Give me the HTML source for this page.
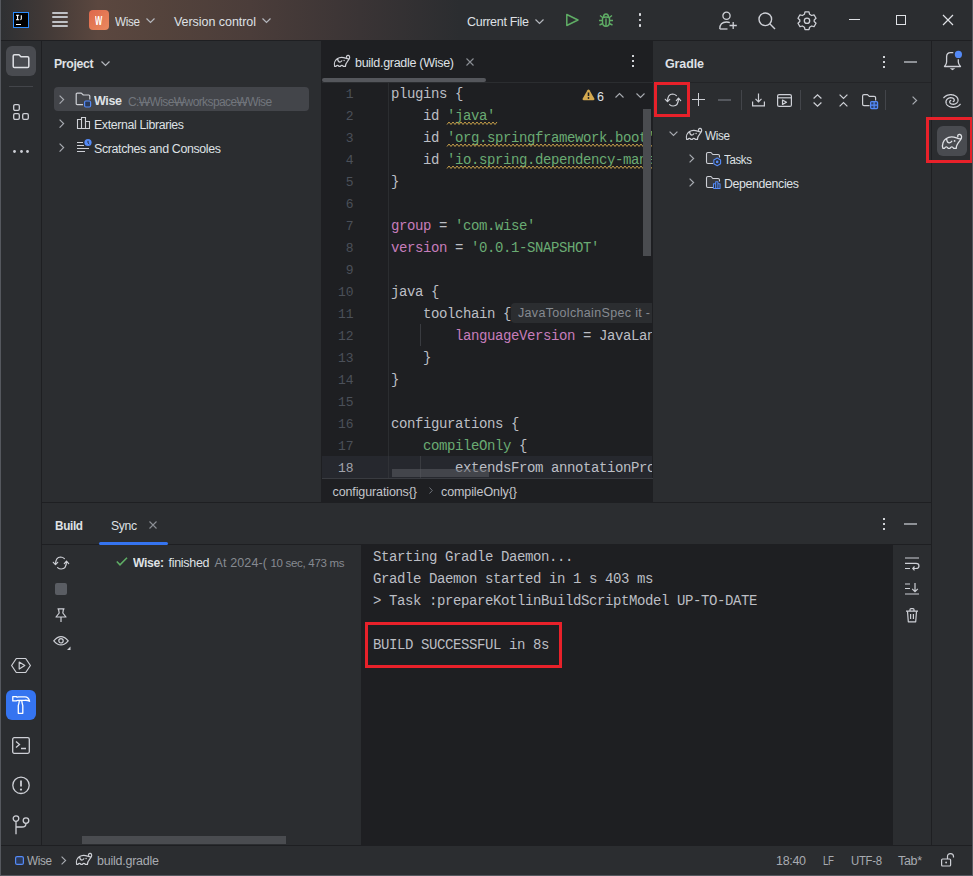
<!DOCTYPE html>
<html><head><meta charset="utf-8">
<style>
*{margin:0;padding:0;box-sizing:border-box}
html,body{width:973px;height:876px;overflow:hidden;background:#2b2d30}
body{position:relative;font-family:"Liberation Sans",sans-serif;font-size:13px;color:#dfe1e5}
.a{position:absolute}
.t{position:absolute;white-space:pre;line-height:1}
svg{position:absolute;overflow:visible}
</style></head><body>
<div class="a" style="left:0px;top:0px;width:973px;height:40px;background:linear-gradient(to right,#2e3033 0px,#3f3836 40px,#5b473f 98px,#54433c 160px,#4b3d3a 250px,#3a3435 360px,#2b2d30 460px);"></div>
<div class="a" style="left:0px;top:40px;width:973px;height:1px;background:#1e1f22;"></div>
<div class="a" style="left:41px;top:41px;width:1px;height:804px;background:#1e1f22;"></div>
<div class="a" style="left:321px;top:41px;width:332px;height:461px;background:#1e1f22;"></div>
<div class="a" style="left:931px;top:41px;width:1px;height:804px;background:#1e1f22;"></div>
<div class="a" style="left:42px;top:502px;width:889px;height:1px;background:#1e1f22;"></div>
<div class="a" style="left:42px;top:544px;width:889px;height:1px;background:#1e1f22;"></div>
<div class="a" style="left:361px;top:545px;width:532px;height:300px;background:#1e1f22;"></div>
<div class="a" style="left:0px;top:845px;width:973px;height:1px;background:#1e1f22;"></div>
<div class="a" style="left:13px;top:12px;width:16px;height:16px;background:#000;border:1px solid #2a8cff"></div>
<svg style="left:13px;top:12px;" width="16" height="16" viewBox="0 0 16 16"><path d="M3 3.3 H6.2 M4.6 3.3 V7.7 M3 7.7 H6.2 M8.3 3.3 V6.8 Q8.3 7.7 7.3 7.7" fill="none" stroke="#fff" stroke-width="1.1"/></svg>
<div class="a" style="left:16px;top:24px;width:5px;height:1px;background:#fff;"></div>
<div class="a" style="left:52px;top:12px;width:16px;height:2px;background:#bfc1c6;border-radius:1px"></div>
<div class="a" style="left:52px;top:16px;width:16px;height:2px;background:#bfc1c6;border-radius:1px"></div>
<div class="a" style="left:52px;top:21px;width:16px;height:2px;background:#bfc1c6;border-radius:1px"></div>
<div class="a" style="left:52px;top:25px;width:16px;height:2px;background:#bfc1c6;border-radius:1px"></div>
<div class="a" style="left:89px;top:10px;width:20px;height:20px;background:linear-gradient(135deg,#de684c,#ea8a5f);border-radius:4px"></div>
<div class="t" style="left:95px;top:15.24px;font-size:12px;color:#fff;font-family:'Liberation Sans',sans-serif;font-weight:bold;transform:scaleX(0.64);transform-origin:left;">W</div>
<div class="t" style="left:115px;top:16.42px;font-size:12.5px;color:#dfe1e5;font-family:'Liberation Sans',sans-serif;letter-spacing:-0.35px;transform:scaleX(0.9355);transform-origin:left;">Wise</div>
<svg style="left:146px;top:17.5px;" width="9" height="6" viewBox="0 0 9 6"><path d="M0.5 0.5 L4.5 4.5 L8.5 0.5" fill="none" stroke="#b4b7bd" stroke-width="1.2"/></svg>
<div class="t" style="left:174px;top:16.42px;font-size:12.5px;color:#dfe1e5;font-family:'Liberation Sans',sans-serif;letter-spacing:-0.049107142857142856px;">Version control</div>
<svg style="left:262px;top:17.5px;" width="9" height="6" viewBox="0 0 9 6"><path d="M0.5 0.5 L4.5 4.5 L8.5 0.5" fill="none" stroke="#b4b7bd" stroke-width="1.2"/></svg>
<div class="t" style="left:467px;top:16.42px;font-size:12.5px;color:#dfe1e5;font-family:'Liberation Sans',sans-serif;letter-spacing:-0.29999999999999977px;">Current File</div>
<svg style="left:535px;top:18.5px;" width="9" height="6" viewBox="0 0 9 6"><path d="M0.5 0.5 L4.5 4.5 L8.5 0.5" fill="none" stroke="#b4b7bd" stroke-width="1.2"/></svg>
<svg style="left:565px;top:13px;" width="15" height="14" viewBox="0 0 15 14"><path d="M1.8 1.5 L13 7 L1.8 12.5 Z" fill="none" stroke="#5fad65" stroke-width="1.5" stroke-linejoin="round"/></svg>
<svg style="left:598px;top:12px;" width="16" height="16" viewBox="0 0 16 16"><g fill="none" stroke="#5fad65" stroke-width="1.4"><path d="M4.5 6 Q8 4 11.5 6 V10 Q11.5 14.3 8 14.3 Q4.5 14.3 4.5 10 Z"/><path d="M5.5 5.5 Q5.5 2 8 2 Q10.5 2 10.5 5.5"/><path d="M1 8.5 H4.5 M15 8.5 H11.5 M1.5 13 L4.8 11.5 M14.5 13 L11.2 11.5 M2 3.5 L5 5.8 M14 3.5 L11 5.8 M8 6.5 V14"/></g></svg>
<div class="a" style="left:638.8px;top:13.3px;width:2.6px;height:2.6px;background:#dfe1e5;border-radius:0.8px"></div>
<div class="a" style="left:638.8px;top:18.8px;width:2.6px;height:2.6px;background:#dfe1e5;border-radius:0.8px"></div>
<div class="a" style="left:638.8px;top:24.2px;width:2.6px;height:2.6px;background:#dfe1e5;border-radius:0.8px"></div>
<svg style="left:719px;top:11px;" width="19" height="19" viewBox="0 0 19 19"><g fill="none" stroke="#ced0d6" stroke-width="1.3"><circle cx="7.5" cy="4.8" r="3.6"/><path d="M0.8 18 Q0.8 11 7.5 11 Q9.5 11 10.8 11.6"/><path d="M0.8 18 H8.5"/><path d="M10.5 14.5 H17.8 M14.2 11 V18"/></g></svg>
<svg style="left:758px;top:12px;" width="18" height="18" viewBox="0 0 18 18"><g fill="none" stroke="#ced0d6" stroke-width="1.4"><circle cx="7.3" cy="7.3" r="6.3"/><path d="M11.8 11.8 L17 17"/></g></svg>
<svg style="left:798px;top:11px;" width="18" height="19" viewBox="0 0 18 19"><g fill="none" stroke="#ced0d6" stroke-width="1.3" stroke-linejoin="round"><path d="M7 0.9 H11 L11.6 3.3 L13.6 4.5 L16 3.8 L18 7.3 L16.2 9 V10.5 L18 12.2 L16 15.7 L13.6 15 L11.6 16.2 L11 18.6 H7 L6.4 16.2 L4.4 15 L2 15.7 L0 12.2 L1.8 10.5 V9 L0 7.3 L2 3.8 L4.4 4.5 L6.4 3.3 Z"/><circle cx="9" cy="9.75" r="2.7"/></g></svg>
<div class="a" style="left:849px;top:19px;width:11px;height:1.2px;background:#dfe1e5;"></div>
<div class="a" style="left:896px;top:15px;width:10px;height:10px;background:transparent;border:1.2px solid #dfe1e5"></div>
<svg style="left:942px;top:14px;" width="12" height="12" viewBox="0 0 12 12"><path d="M1 1 L11 11 M11 1 L1 11" stroke="#dfe1e5" stroke-width="1.2"/></svg>
<div class="a" style="left:6px;top:46px;width:30px;height:30px;background:#494b50;border-radius:6px"></div>
<svg style="left:12px;top:53px;" width="18" height="16" viewBox="0 0 18 16"><path d="M1.2 3 Q1.2 1.7 2.5 1.7 H7 L9 3.8 H15.5 Q16.8 3.8 16.8 5.1 V13.3 Q16.8 14.6 15.5 14.6 H2.5 Q1.2 14.6 1.2 13.3 Z" fill="none" stroke="#dfe1e5" stroke-width="1.5" stroke-linejoin="round"/></svg>
<div class="a" style="left:9px;top:86px;width:24px;height:1px;background:#43454a;"></div>
<svg style="left:13px;top:104px;" width="17" height="17" viewBox="0 0 17 17"><g fill="none" stroke="#ced0d6" stroke-width="1.3"><rect x="0.7" y="0.7" width="5.6" height="5.6" rx="1.3"/><rect x="0.7" y="9.7" width="5.6" height="5.6" rx="1.3"/><rect x="9.7" y="9.7" width="5.6" height="5.6" rx="1.3"/></g></svg>
<svg style="left:13.0px;top:150px;" width="3" height="3" viewBox="0 0 3 3"><circle cx="1.5" cy="1.5" r="1.4" fill="#ced0d6"/></svg>
<svg style="left:19.5px;top:150px;" width="3" height="3" viewBox="0 0 3 3"><circle cx="1.5" cy="1.5" r="1.4" fill="#ced0d6"/></svg>
<svg style="left:26.0px;top:150px;" width="3" height="3" viewBox="0 0 3 3"><circle cx="1.5" cy="1.5" r="1.4" fill="#ced0d6"/></svg>
<svg style="left:11px;top:657px;" width="20" height="17" viewBox="0 0 20 17"><g fill="none" stroke="#ced0d6" stroke-width="1.2" stroke-linejoin="round"><path d="M5.3 1.5 H14.7 L19.4 8.5 L14.7 15.5 H5.3 L0.6 8.5 Z"/><path d="M8.2 5 L13.8 8.5 L8.2 12 Z"/></g></svg>
<div class="a" style="left:6px;top:690px;width:30px;height:30px;background:#3574f0;border-radius:6px"></div>
<svg style="left:6px;top:690px;" width="30" height="30" viewBox="0 0 30 30"><g fill="none" stroke="#ffffff" stroke-width="1.3" stroke-linejoin="round"><path d="M6.8 6.6 H10.2 Q11.2 7.3 12.3 6.9 H19 Q22.6 6.9 23.6 11.3 Q21 9.9 18.5 10.4 H12.3 Q11.2 10.1 10.2 10.9 H6.8 Z"/><path d="M13.3 10.6 H15.8 Q15.9 13.5 16.8 15.5 V23.3 H12.3 V15.5 Q13.2 13.5 13.3 10.6 Z"/></g></svg>
<svg style="left:12px;top:737px;" width="18" height="17" viewBox="0 0 18 17"><g fill="none" stroke="#ced0d6" stroke-width="1.3"><rect x="0.7" y="0.7" width="16.6" height="15.6" rx="1.5"/><path d="M4 4.5 L7.5 7.5 L4 10.5 M9 11.5 H14"/></g></svg>
<svg style="left:12px;top:776px;" width="19" height="19" viewBox="0 0 19 19"><g fill="none" stroke="#ced0d6" stroke-width="1.3"><circle cx="9" cy="9.3" r="8.2"/><path d="M9 4.5 V10.5" stroke-width="1.8"/></g><circle cx="9" cy="13.6" r="1.1" fill="#ced0d6"/></svg>
<svg style="left:12px;top:815px;" width="18" height="20" viewBox="0 0 18 20"><g fill="none" stroke="#ced0d6" stroke-width="1.3"><circle cx="4" cy="3.6" r="2.8"/><circle cx="14" cy="5.6" r="2.8"/><path d="M4 6.4 V19.2 M4 12 H10 Q14 12 14 8.4"/></g></svg>
<div class="t" style="left:54px;top:58.42px;font-size:12.5px;color:#dfe1e5;font-family:'Liberation Sans',sans-serif;font-weight:bold;letter-spacing:-0.35px;transform:scaleX(0.9808);transform-origin:left;">Project</div>
<svg style="left:101px;top:61px;" width="9" height="6" viewBox="0 0 9 6"><path d="M0.5 0.5 L4.5 4.5 L8.5 0.5" fill="none" stroke="#b4b7bd" stroke-width="1.2"/></svg>
<div class="a" style="left:54px;top:87px;width:255px;height:24px;background:#43454a;border-radius:4px"></div>
<svg style="left:59px;top:95px;" width="6" height="10" viewBox="0 0 6 10"><path d="M0.6 0.6 L4.6 4.6 L0.6 8.6" fill="none" stroke="#a8abb1" stroke-width="1.2"/></svg>
<svg style="left:59px;top:119px;" width="6" height="10" viewBox="0 0 6 10"><path d="M0.6 0.6 L4.6 4.6 L0.6 8.6" fill="none" stroke="#a8abb1" stroke-width="1.2"/></svg>
<svg style="left:59px;top:143px;" width="6" height="10" viewBox="0 0 6 10"><path d="M0.6 0.6 L4.6 4.6 L0.6 8.6" fill="none" stroke="#a8abb1" stroke-width="1.2"/></svg>
<svg style="left:75px;top:92px;" width="18" height="16" viewBox="0 0 18 16"><path d="M8 12.6 H2.3 Q1.2 12.6 1.2 11.5 V2.2 Q1.2 1.1 2.3 1.1 H6.3 L8.3 3 H13.7 Q14.8 3 14.8 4.1 V7.5" fill="none" stroke="#ced0d6" stroke-width="1.2" stroke-linejoin="round"/><rect x="9.6" y="9" width="6" height="6" rx="1.2" fill="#2b3a5a" stroke="#548af7" stroke-width="1.2"/></svg>
<div class="t" style="left:94px;top:95.42px;font-size:12.5px;color:#dfe1e5;font-family:'Liberation Sans',sans-serif;font-weight:bold;letter-spacing:-0.35px;transform:scaleX(0.9996);transform-origin:left;">Wise</div>
<div class="t" style="left:128px;top:95.84px;font-size:12px;color:#72767d;font-family:'Liberation Sans',sans-serif;letter-spacing:-0.6px;">C:<span style="background:linear-gradient(#6d7178,#6d7178) 0 58%/100% 1px no-repeat">W</span>Wise<span style="background:linear-gradient(#6d7178,#6d7178) 0 58%/100% 1px no-repeat">W</span>workspace<span style="background:linear-gradient(#6d7178,#6d7178) 0 58%/100% 1px no-repeat">W</span>Wise</div>
<svg style="left:76px;top:116px;" width="16" height="16" viewBox="0 0 16 16"><g fill="none" stroke="#ced0d6" stroke-width="1.1"><path d="M1.5 3.5 H5.5 V12.5 H1.5 Z M5.5 1.5 H9.5 V12.5 H5.5 Z M9.5 5.5 H13.5 V12.5 H9.5 Z"/></g></svg>
<div class="t" style="left:94px;top:119.42px;font-size:12.5px;color:#dfe1e5;font-family:'Liberation Sans',sans-serif;letter-spacing:-0.35px;transform:scaleX(0.9856);transform-origin:left;">External Libraries</div>
<svg style="left:76px;top:140px;" width="17" height="15" viewBox="0 0 17 15"><g fill="none" stroke="#ced0d6" stroke-width="1.2"><path d="M1 2.5 H7 M1 5.5 H8 M1 8.5 H13 M1 11.5 H9"/></g><circle cx="12" cy="2.5" r="3.6" fill="#548af7"/><path d="M12 0.8 V2.8 L13.3 4" stroke="#1e1f22" stroke-width="0.9" fill="none"/></svg>
<div class="t" style="left:94px;top:143.42px;font-size:12.5px;color:#dfe1e5;font-family:'Liberation Sans',sans-serif;letter-spacing:-0.35px;transform:scaleX(0.9911);transform-origin:left;">Scratches and Consoles</div>
<svg style="left:334px;top:55px" width="16.00" height="12.00" viewBox="5 7.5 20 15"><path d="M5.9 21.8 C4.6 18 6.5 14 9 12.2 C12 10 16 10 19.5 11.4 C21 12 22.5 12.6 23.8 12.2 M19.3 21.8 C19 18.5 21 16.5 23.3 13.6 C25 11.5 25.2 8.6 22.9 8 C21.3 7.7 20.2 9 20.9 10.2 M5.9 21.8 H7.4 Q9.3 19 11.2 21.8 H12.9 Q14.8 19 16.7 21.8 H19.3 M9.6 12.4 Q10 16.4 12.4 16.4 Q14.1 16.2 14.8 14.8" fill="none" stroke="#ced0d6" stroke-width="1.500" stroke-linecap="round" stroke-linejoin="round"/><circle cx="17.6" cy="14.4" r="0.90" fill="#ced0d6"/></svg>
<div class="t" style="left:355px;top:57.42px;font-size:12.5px;color:#dfe1e5;font-family:'Liberation Sans',sans-serif;letter-spacing:-0.28888888888888903px;">build.gradle (Wise)</div>
<svg style="left:466px;top:58px;" width="8" height="8" viewBox="0 0 8 8"><path d="M0.5 0.5 L7.5 7.5 M7.5 0.5 L0.5 7.5" stroke="#8c8f95" stroke-width="1.1"/></svg>
<div class="a" style="left:632px;top:55px;width:2px;height:2px;background:#d0d2d6;"></div>
<div class="a" style="left:632px;top:60px;width:2px;height:2px;background:#d0d2d6;"></div>
<div class="a" style="left:632px;top:65px;width:2px;height:2px;background:#d0d2d6;"></div>
<div class="a" style="left:322px;top:82px;width:331px;height:1px;background:#2b2d30;"></div>
<div class="a" style="left:322px;top:78px;width:164px;height:4px;background:#55575c;border-radius:2px"></div>
<div class="a" style="left:322px;top:456px;width:330px;height:22px;background:#26282e;"></div>
<div class="a" style="left:388px;top:83px;width:1px;height:373px;background:#2b2d30;"></div>
<div class="a" style="left:388px;top:456px;width:1px;height:22px;background:#303237;"></div>
<div class="a" style="left:420px;top:324px;width:1px;height:22px;background:#393b40;"></div>
<div class="a" style="left:420px;top:456px;width:1px;height:22px;background:#393b40;"></div>
<div class="a" style="left:322px;top:83px;width:330px;height:395px;overflow:hidden"><div class="t" style="left:23.69999999999999px;top:4.54px;font-size:13px;color:#4b5059;font-family:'Liberation Mono',monospace;letter-spacing:0px;">1</div>
<div class="t" style="left:69px;top:3.57px;font-size:14px;color:#bcbec4;font-family:'Liberation Mono',monospace;letter-spacing:-0.4px;">plugins {</div>
<div class="t" style="left:23.69999999999999px;top:26.54px;font-size:13px;color:#4b5059;font-family:'Liberation Mono',monospace;letter-spacing:0px;">2</div>
<div class="t" style="left:69px;top:25.57px;font-size:14px;color:#bcbec4;font-family:'Liberation Mono',monospace;letter-spacing:-0.4px;">    id </div>
<div class="t" style="left:125px;top:25.57px;font-size:14px;color:#6aab73;font-family:'Liberation Mono',monospace;letter-spacing:-0.4px;">'java'</div>
<div class="t" style="left:23.69999999999999px;top:48.54px;font-size:13px;color:#4b5059;font-family:'Liberation Mono',monospace;letter-spacing:0px;">3</div>
<div class="t" style="left:69px;top:47.57px;font-size:14px;color:#bcbec4;font-family:'Liberation Mono',monospace;letter-spacing:-0.4px;">    id </div>
<div class="t" style="left:125px;top:47.57px;font-size:14px;color:#6aab73;font-family:'Liberation Mono',monospace;letter-spacing:-0.4px;">'org.springframework.boot'</div>
<div class="t" style="left:23.69999999999999px;top:70.54px;font-size:13px;color:#4b5059;font-family:'Liberation Mono',monospace;letter-spacing:0px;">4</div>
<div class="t" style="left:69px;top:69.57px;font-size:14px;color:#bcbec4;font-family:'Liberation Mono',monospace;letter-spacing:-0.4px;">    id </div>
<div class="t" style="left:125px;top:69.57px;font-size:14px;color:#6aab73;font-family:'Liberation Mono',monospace;letter-spacing:-0.4px;">'io.spring.dependency-management'</div>
<div class="t" style="left:23.69999999999999px;top:92.54px;font-size:13px;color:#4b5059;font-family:'Liberation Mono',monospace;letter-spacing:0px;">5</div>
<div class="t" style="left:69px;top:91.57px;font-size:14px;color:#bcbec4;font-family:'Liberation Mono',monospace;letter-spacing:-0.4px;">}</div>
<div class="t" style="left:23.69999999999999px;top:114.54px;font-size:13px;color:#4b5059;font-family:'Liberation Mono',monospace;letter-spacing:0px;">6</div>
<div class="t" style="left:23.69999999999999px;top:136.54px;font-size:13px;color:#4b5059;font-family:'Liberation Mono',monospace;letter-spacing:0px;">7</div>
<div class="t" style="left:69px;top:135.57px;font-size:14px;color:#c77dbb;font-family:'Liberation Mono',monospace;letter-spacing:-0.4px;">group</div>
<div class="t" style="left:109px;top:135.57px;font-size:14px;color:#bcbec4;font-family:'Liberation Mono',monospace;letter-spacing:-0.4px;"> = </div>
<div class="t" style="left:133px;top:135.57px;font-size:14px;color:#6aab73;font-family:'Liberation Mono',monospace;letter-spacing:-0.4px;">'com.wise'</div>
<div class="t" style="left:23.69999999999999px;top:158.54px;font-size:13px;color:#4b5059;font-family:'Liberation Mono',monospace;letter-spacing:0px;">8</div>
<div class="t" style="left:69px;top:157.57px;font-size:14px;color:#c77dbb;font-family:'Liberation Mono',monospace;letter-spacing:-0.4px;">version</div>
<div class="t" style="left:125px;top:157.57px;font-size:14px;color:#bcbec4;font-family:'Liberation Mono',monospace;letter-spacing:-0.4px;"> = </div>
<div class="t" style="left:149px;top:157.57px;font-size:14px;color:#6aab73;font-family:'Liberation Mono',monospace;letter-spacing:-0.4px;">'0.0.1-SNAPSHOT'</div>
<div class="t" style="left:23.69999999999999px;top:180.54px;font-size:13px;color:#4b5059;font-family:'Liberation Mono',monospace;letter-spacing:0px;">9</div>
<div class="t" style="left:15.899999999999977px;top:202.54px;font-size:13px;color:#4b5059;font-family:'Liberation Mono',monospace;letter-spacing:0px;">10</div>
<div class="t" style="left:69px;top:201.57px;font-size:14px;color:#bcbec4;font-family:'Liberation Mono',monospace;letter-spacing:-0.4px;">java {</div>
<div class="t" style="left:15.899999999999977px;top:224.54px;font-size:13px;color:#4b5059;font-family:'Liberation Mono',monospace;letter-spacing:0px;">11</div>
<div class="t" style="left:69px;top:223.57px;font-size:14px;color:#bcbec4;font-family:'Liberation Mono',monospace;letter-spacing:-0.4px;">    toolchain {</div>
<div class="t" style="left:15.899999999999977px;top:246.54px;font-size:13px;color:#4b5059;font-family:'Liberation Mono',monospace;letter-spacing:0px;">12</div>
<div class="t" style="left:69px;top:245.57px;font-size:14px;color:#bcbec4;font-family:'Liberation Mono',monospace;letter-spacing:-0.4px;">        </div>
<div class="t" style="left:133px;top:245.57px;font-size:14px;color:#c77dbb;font-family:'Liberation Mono',monospace;letter-spacing:-0.4px;">languageVersion</div>
<div class="t" style="left:253px;top:245.57px;font-size:14px;color:#bcbec4;font-family:'Liberation Mono',monospace;letter-spacing:-0.4px;"> = JavaLanguageVersion.of(17)</div>
<div class="t" style="left:15.899999999999977px;top:268.54px;font-size:13px;color:#4b5059;font-family:'Liberation Mono',monospace;letter-spacing:0px;">13</div>
<div class="t" style="left:69px;top:267.57px;font-size:14px;color:#bcbec4;font-family:'Liberation Mono',monospace;letter-spacing:-0.4px;">    }</div>
<div class="t" style="left:15.899999999999977px;top:290.54px;font-size:13px;color:#4b5059;font-family:'Liberation Mono',monospace;letter-spacing:0px;">14</div>
<div class="t" style="left:69px;top:289.57px;font-size:14px;color:#bcbec4;font-family:'Liberation Mono',monospace;letter-spacing:-0.4px;">}</div>
<div class="t" style="left:15.899999999999977px;top:312.54px;font-size:13px;color:#4b5059;font-family:'Liberation Mono',monospace;letter-spacing:0px;">15</div>
<div class="t" style="left:15.899999999999977px;top:334.54px;font-size:13px;color:#4b5059;font-family:'Liberation Mono',monospace;letter-spacing:0px;">16</div>
<div class="t" style="left:69px;top:333.57px;font-size:14px;color:#bcbec4;font-family:'Liberation Mono',monospace;letter-spacing:-0.4px;">configurations {</div>
<div class="t" style="left:15.899999999999977px;top:356.54px;font-size:13px;color:#4b5059;font-family:'Liberation Mono',monospace;letter-spacing:0px;">17</div>
<div class="t" style="left:69px;top:355.57px;font-size:14px;color:#6aab73;font-family:'Liberation Mono',monospace;letter-spacing:-0.4px;">    compileOnly</div>
<div class="t" style="left:189px;top:355.57px;font-size:14px;color:#bcbec4;font-family:'Liberation Mono',monospace;letter-spacing:-0.4px;"> {</div>
<div class="t" style="left:15.899999999999977px;top:378.54px;font-size:13px;color:#a1a3ab;font-family:'Liberation Mono',monospace;letter-spacing:0px;">18</div>
<div class="t" style="left:69px;top:377.57px;font-size:14px;color:#bcbec4;font-family:'Liberation Mono',monospace;letter-spacing:-0.4px;">        extendsFrom annotationProcessor</div>
<svg style="left:0;top:0" width="330" height="395"><path d="M125 41.5 L127 39 L129 41.5 L131 39 L133 41.5 L135 39 L137 41.5 L139 39 L141 41.5 L143 39 L145 41.5 L147 39 L149 41.5 L151 39 L153 41.5 L155 39 L157 41.5 L159 39 L161 41.5 L163 39 L165 41.5 L167 39 L169 41.5 L171 39 L173 41.5 L175 39 M125 63.5 L127 61 L129 63.5 L131 61 L133 63.5 L135 61 L137 63.5 L139 61 L141 63.5 L143 61 L145 63.5 L147 61 L149 63.5 L151 61 L153 63.5 L155 61 L157 63.5 L159 61 L161 63.5 L163 61 L165 63.5 L167 61 L169 63.5 L171 61 L173 63.5 L175 61 L177 63.5 L179 61 L181 63.5 L183 61 L185 63.5 L187 61 L189 63.5 L191 61 L193 63.5 L195 61 L197 63.5 L199 61 L201 63.5 L203 61 L205 63.5 L207 61 L209 63.5 L211 61 L213 63.5 L215 61 L217 63.5 L219 61 L221 63.5 L223 61 L225 63.5 L227 61 L229 63.5 L231 61 L233 63.5 L235 61 L237 63.5 L239 61 L241 63.5 L243 61 L245 63.5 L247 61 L249 63.5 L251 61 L253 63.5 L255 61 L257 63.5 L259 61 L261 63.5 L263 61 L265 63.5 L267 61 L269 63.5 L271 61 L273 63.5 L275 61 L277 63.5 L279 61 L281 63.5 L283 61 L285 63.5 L287 61 L289 63.5 L291 61 L293 63.5 L295 61 L297 63.5 L299 61 L301 63.5 L303 61 L305 63.5 L307 61 L309 63.5 L311 61 L313 63.5 L315 61 L317 63.5 L319 61 L321 63.5 L323 61 L325 63.5 L327 61 L329 63.5 L331 61 L333 63.5 L335 61 L337 63.5 L339 61 M125 85.5 L127 83 L129 85.5 L131 83 L133 85.5 L135 83 L137 85.5 L139 83 L141 85.5 L143 83 L145 85.5 L147 83 L149 85.5 L151 83 L153 85.5 L155 83 L157 85.5 L159 83 L161 85.5 L163 83 L165 85.5 L167 83 L169 85.5 L171 83 L173 85.5 L175 83 L177 85.5 L179 83 L181 85.5 L183 83 L185 85.5 L187 83 L189 85.5 L191 83 L193 85.5 L195 83 L197 85.5 L199 83 L201 85.5 L203 83 L205 85.5 L207 83 L209 85.5 L211 83 L213 85.5 L215 83 L217 85.5 L219 83 L221 85.5 L223 83 L225 85.5 L227 83 L229 85.5 L231 83 L233 85.5 L235 83 L237 85.5 L239 83 L241 85.5 L243 83 L245 85.5 L247 83 L249 85.5 L251 83 L253 85.5 L255 83 L257 85.5 L259 83 L261 85.5 L263 83 L265 85.5 L267 83 L269 85.5 L271 83 L273 85.5 L275 83 L277 85.5 L279 83 L281 85.5 L283 83 L285 85.5 L287 83 L289 85.5 L291 83 L293 85.5 L295 83 L297 85.5 L299 83 L301 85.5 L303 83 L305 85.5 L307 83 L309 85.5 L311 83 L313 85.5 L315 83 L317 85.5 L319 83 L321 85.5 L323 83 L325 85.5 L327 83 L329 85.5 L331 83 L333 85.5 L335 83 L337 85.5 L339 83" fill="none" stroke="#c69f4a" stroke-width="1"/></svg><div class="a" style="left:189px;top:220px;width:160px;height:20px;background:#2b2d30;border-radius:4px"></div>
<div class="t" style="left:196px;top:223.92px;font-size:12.5px;color:#868a91;font-family:'Liberation Sans',sans-serif;letter-spacing:0.33035714285714285px;">JavaToolchainSpec it -</div>
</div>
<svg style="left:582px;top:89px;" width="13" height="12" viewBox="0 0 13 12"><path d="M6.5 0.5 Q7.2 0.5 7.6 1.2 L12.4 9.8 Q12.8 11.2 11.4 11.3 H1.6 Q0.2 11.2 0.6 9.8 L5.4 1.2 Q5.8 0.5 6.5 0.5 Z" fill="#d4a94f"/><path d="M6.5 3.5 V7" stroke="#1e1f22" stroke-width="1.6"/><circle cx="6.5" cy="9" r="0.9" fill="#1e1f22"/></svg>
<div class="t" style="left:597px;top:91.42px;font-size:12.5px;color:#dfe1e5;font-family:'Liberation Sans',sans-serif;">6</div>
<svg style="left:615px;top:93px;" width="9" height="5" viewBox="0 0 9 5"><path d="M0.5 4.5 L4.5 0.5 L8.5 4.5" fill="none" stroke="#a8abb1" stroke-width="1.1"/></svg>
<svg style="left:636px;top:93px;" width="9" height="5" viewBox="0 0 9 5"><path d="M0.5 0.5 L4.5 4.5 L8.5 0.5" fill="none" stroke="#a8abb1" stroke-width="1.1"/></svg>
<div class="a" style="left:643px;top:109px;width:8px;height:147px;background:#4a4c50;border-radius:0"></div>
<div class="a" style="left:392px;top:469px;width:97px;height:8px;background:rgba(95,98,104,0.5);"></div>
<div class="a" style="left:322px;top:478px;width:331px;height:1px;background:#393b40;"></div>
<div class="t" style="left:332.5px;top:486.42px;font-size:12.5px;color:#c3c5ca;font-family:'Liberation Sans',sans-serif;letter-spacing:-0.11166666666666648px;">configurations{}</div>
<svg style="left:429px;top:487px;" width="4" height="7" viewBox="0 0 4 7"><path d="M0.5 0.5 L3.3 3.5 L0.5 6.5" fill="none" stroke="#6f737a" stroke-width="1"/></svg>
<div class="t" style="left:441px;top:486.42px;font-size:12.5px;color:#c3c5ca;font-family:'Liberation Sans',sans-serif;letter-spacing:-0.09375px;">compileOnly{}</div>
<div class="t" style="left:665px;top:58.42px;font-size:12.5px;color:#dfe1e5;font-family:'Liberation Sans',sans-serif;font-weight:bold;letter-spacing:-0.12000000000000029px;">Gradle</div>
<div class="a" style="left:883px;top:56px;width:2px;height:2px;background:#d0d2d6;"></div>
<div class="a" style="left:883px;top:61px;width:2px;height:2px;background:#d0d2d6;"></div>
<div class="a" style="left:883px;top:66px;width:2px;height:2px;background:#d0d2d6;"></div>
<div class="a" style="left:903.5px;top:61px;width:13px;height:2px;background:#8e9196;"></div>
<div class="a" style="left:653px;top:82px;width:278px;height:1px;background:#232427;"></div>
<svg style="left:660px;top:88px;" width="24" height="24" viewBox="0 0 24 24"><g fill="none" stroke="#ced0d6" stroke-width="1.2" stroke-linecap="round" stroke-linejoin="round"><path d="M16.4 7.6 Q14.6 6 12.6 6 Q7.6 6.2 7.5 13.3"/><path d="M5.3 11.3 L7.5 13.6 L9.7 11.3"/><path d="M9.6 16.6 Q11.2 18 13.2 18 Q18.4 17.8 18.5 10.4"/><path d="M16.3 12.6 L18.5 10.2 L20.7 12.6"/></g></svg>
<div class="a" style="left:692px;top:99.4px;width:13px;height:1.1px;background:#ced0d6;"></div>
<div class="a" style="left:698px;top:93px;width:1.1px;height:13px;background:#ced0d6;"></div>
<div class="a" style="left:718px;top:99.3px;width:13px;height:1.3px;background:#55585e;"></div>
<div class="a" style="left:741px;top:90px;width:1px;height:20px;background:#43454a;"></div>
<svg style="left:752px;top:93px;" width="13" height="14" viewBox="0 0 13 14"><g fill="none" stroke="#ced0d6" stroke-width="1.2"><path d="M6.5 0.5 V8.5 M3.5 5.8 L6.5 8.8 L9.5 5.8"/><path d="M0.6 8.5 V12.8 H12.4 V8.5"/></g></svg>
<svg style="left:777px;top:94px;" width="15" height="13" viewBox="0 0 15 13"><g fill="none" stroke="#ced0d6" stroke-width="1.2"><rect x="0.6" y="0.6" width="13.8" height="11.8" rx="1.5"/><path d="M0.6 3.8 H14.4"/><path d="M5.5 6 L9.5 8.2 L5.5 10.4 Z" stroke-linejoin="round"/></g></svg>
<div class="a" style="left:800px;top:90px;width:1px;height:20px;background:#43454a;"></div>
<svg style="left:813px;top:94px;" width="9" height="13" viewBox="0 0 9 13"><g fill="none" stroke="#ced0d6" stroke-width="1.2"><path d="M0.6 4.5 L4.5 0.8 L8.4 4.5 M0.6 8.5 L4.5 12.2 L8.4 8.5"/></g></svg>
<svg style="left:839px;top:94px;" width="9" height="13" viewBox="0 0 9 13"><g fill="none" stroke="#ced0d6" stroke-width="1.2"><path d="M0.6 0.6 L4.5 4.5 L8.4 0.6 M0.6 12.4 L4.5 8.5 L8.4 12.4"/></g></svg>
<svg style="left:862px;top:94px;" width="16" height="15" viewBox="0 0 16 15"><path d="M7.5 11.6 H2 Q0.6 11.6 0.6 10.2 V2 Q0.6 0.6 2 0.6 H5.5 L7.3 2.4 H12.2 Q13.6 2.4 13.6 3.8 V6.5" fill="none" stroke="#ced0d6" stroke-width="1.2" stroke-linejoin="round"/><rect x="8.6" y="7.6" width="7" height="7" rx="1" fill="#2e436e" stroke="#548af7" stroke-width="1.2"/><path d="M12.1 7.8 V14.4 M8.8 11.1 H15.4" stroke="#548af7" stroke-width="1.2"/></svg>
<div class="a" style="left:885px;top:90px;width:1px;height:20px;background:#43454a;"></div>
<svg style="left:912px;top:96px;" width="6" height="9" viewBox="0 0 6 9"><path d="M0.6 0.6 L4.6 4.5 L0.6 8.4" fill="none" stroke="#a8abb1" stroke-width="1.2"/></svg>
<svg style="left:669px;top:131px;" width="9" height="6" viewBox="0 0 9 6"><path d="M0.6 0.6 L4.5 4.5 L8.4 0.6" fill="none" stroke="#a8abb1" stroke-width="1.2"/></svg>
<svg style="left:686px;top:128px" width="16.00" height="12.00" viewBox="5 7.5 20 15"><path d="M5.9 21.8 C4.6 18 6.5 14 9 12.2 C12 10 16 10 19.5 11.4 C21 12 22.5 12.6 23.8 12.2 M19.3 21.8 C19 18.5 21 16.5 23.3 13.6 C25 11.5 25.2 8.6 22.9 8 C21.3 7.7 20.2 9 20.9 10.2 M5.9 21.8 H7.4 Q9.3 19 11.2 21.8 H12.9 Q14.8 19 16.7 21.8 H19.3 M9.6 12.4 Q10 16.4 12.4 16.4 Q14.1 16.2 14.8 14.8" fill="none" stroke="#ced0d6" stroke-width="1.500" stroke-linecap="round" stroke-linejoin="round"/><circle cx="17.6" cy="14.4" r="0.90" fill="#ced0d6"/></svg>
<div class="t" style="left:705px;top:130.42px;font-size:12.5px;color:#dfe1e5;font-family:'Liberation Sans',sans-serif;letter-spacing:-0.35px;transform:scaleX(0.9355);transform-origin:left;">Wise</div>
<svg style="left:689px;top:154px;" width="6" height="9" viewBox="0 0 6 9"><path d="M0.6 0.6 L4.6 4.5 L0.6 8.4" fill="none" stroke="#a8abb1" stroke-width="1.2"/></svg>
<svg style="left:689px;top:178px;" width="6" height="9" viewBox="0 0 6 9"><path d="M0.6 0.6 L4.6 4.5 L0.6 8.4" fill="none" stroke="#a8abb1" stroke-width="1.2"/></svg>
<svg style="left:705px;top:151px;" width="18" height="18" viewBox="0 0 18 18"><path d="M8 12.5 H2.9 Q1.5 12.5 1.5 11.1 V2.9 Q1.5 1.5 2.9 1.5 H6 L7.8 3.5 H13.1 Q14.5 3.5 14.5 4.9 V6.5" fill="#393b3f" stroke="#ced0d6" stroke-width="1.1" stroke-linejoin="round"/><path d="M12.20 7.00 L8.82 8.95 L8.82 12.85 L12.20 14.80 L15.58 12.85 L15.58 8.95 Z" fill="#2b2d30" stroke="#548af7" stroke-width="1.1" stroke-linejoin="round"/><circle cx="12.200000000000045" cy="10.900000000000006" r="1.3" fill="#548af7"/></svg>
<div class="t" style="left:724px;top:154.42px;font-size:12.5px;color:#dfe1e5;font-family:'Liberation Sans',sans-serif;letter-spacing:-0.35px;transform:scaleX(0.9165);transform-origin:left;">Tasks</div>
<svg style="left:705px;top:175px;" width="18" height="18" viewBox="0 0 18 18"><path d="M8 12.5 H2.9 Q1.5 12.5 1.5 11.1 V2.9 Q1.5 1.5 2.9 1.5 H6 L7.8 3.5 H13.1 Q14.5 3.5 14.5 4.9 V6.5" fill="#393b3f" stroke="#ced0d6" stroke-width="1.1" stroke-linejoin="round"/><path d="M8.5 13.5 V8.8 H10.7 V13.5 M10.7 13.5 V6.8 H12.9 V13.5 M12.9 13.5 V8.8 H15 V13.5 H8.5" fill="#2b2d30" stroke="#548af7" stroke-width="1.1" stroke-linejoin="round"/></svg>
<div class="t" style="left:724px;top:178.42px;font-size:12.5px;color:#dfe1e5;font-family:'Liberation Sans',sans-serif;letter-spacing:-0.35px;transform:scaleX(0.9859);transform-origin:left;">Dependencies</div>
<svg style="left:943px;top:51px;" width="19" height="20" viewBox="0 0 19 20"><g fill="none" stroke="#ced0d6" stroke-width="1.3" stroke-linejoin="round"><path d="M10.3 1.6 H7.5 Q3.6 1.6 3.6 6 V11 Q3.6 13 1.5 15.5 H17.5 Q15.3 13 15.3 11 V8.3"/></g><path d="M6.7 17.3 H12.3 L9.5 19.2 Z" fill="#ced0d6"/><circle cx="15.4" cy="3.4" r="3.6" fill="#548af7"/></svg>
<svg style="left:944px;top:93px;" width="17" height="16" viewBox="0 0 17 16"><path d="M6.75 7.49 L6.63 7.54 L6.51 7.59 L6.39 7.66 L6.28 7.73 L6.18 7.82 L6.08 7.92 L5.99 8.03 L5.91 8.15 L5.85 8.27 L5.79 8.41 L5.75 8.55 L5.72 8.70 L5.71 8.85 L5.71 9.01 L5.74 9.17 L5.77 9.34 L5.83 9.50 L5.91 9.67 L6.00 9.83 L6.12 9.99 L6.25 10.15 L6.40 10.30 L6.57 10.45 L6.75 10.59 L6.96 10.71 L7.18 10.83 L7.42 10.94 L7.67 11.03 L7.93 11.11 L8.21 11.18 L8.50 11.23 L8.80 11.26 L9.10 11.27 L9.41 11.27 L9.73 11.25 L10.05 11.20 L10.37 11.14 L10.69 11.06 L11.00 10.95 L11.31 10.83 L11.62 10.69 L11.91 10.52 L12.19 10.34 L12.46 10.13 L12.72 9.91 L12.95 9.67 L13.17 9.42 L13.36 9.14 L13.53 8.86 L13.68 8.56 L13.80 8.24 L13.90 7.92 L13.96 7.58 L13.99 7.24 L14.00 6.90 L13.97 6.55 L13.91 6.19 L13.81 5.84 L13.69 5.49 L13.53 5.14 L13.33 4.80 L13.10 4.47 L12.84 4.14 L12.55 3.83 L12.22 3.54 L11.87 3.25 L11.49 2.99 L11.08 2.75 L10.64 2.52 L10.18 2.33 L9.70 2.15 L9.19 2.00 L8.67 1.88 L8.14 1.79 L7.59 1.73 L7.03 1.70 L6.46 1.70 L5.89 1.74 L5.32 1.80 L4.75 1.90 L4.19 2.04 L3.63 2.21 L3.08 2.41 L2.55 2.64 L2.03 2.91 L1.54 3.20 L1.07 3.53 L0.62 3.89 L0.21 4.27 L-0.18 4.68 M9.25 8.51 L9.37 8.46 L9.49 8.41 L9.61 8.34 L9.72 8.27 L9.82 8.18 L9.92 8.08 L10.01 7.97 L10.09 7.85 L10.15 7.73 L10.21 7.59 L10.25 7.45 L10.28 7.30 L10.29 7.15 L10.29 6.99 L10.26 6.83 L10.23 6.66 L10.17 6.50 L10.09 6.33 L10.00 6.17 L9.88 6.01 L9.75 5.85 L9.60 5.70 L9.43 5.55 L9.25 5.41 L9.04 5.29 L8.82 5.17 L8.58 5.06 L8.33 4.97 L8.07 4.89 L7.79 4.82 L7.50 4.77 L7.20 4.74 L6.90 4.73 L6.59 4.73 L6.27 4.75 L5.95 4.80 L5.63 4.86 L5.31 4.94 L5.00 5.05 L4.69 5.17 L4.38 5.31 L4.09 5.48 L3.81 5.66 L3.54 5.87 L3.28 6.09 L3.05 6.33 L2.83 6.58 L2.64 6.86 L2.47 7.14 L2.32 7.44 L2.20 7.76 L2.10 8.08 L2.04 8.42 L2.01 8.76 L2.00 9.10 L2.03 9.45 L2.09 9.81 L2.19 10.16 L2.31 10.51 L2.47 10.86 L2.67 11.20 L2.90 11.53 L3.16 11.86 L3.45 12.17 L3.78 12.46 L4.13 12.75 L4.51 13.01 L4.92 13.25 L5.36 13.48 L5.82 13.67 L6.30 13.85 L6.81 14.00 L7.33 14.12 L7.86 14.21 L8.41 14.27 L8.97 14.30 L9.54 14.30 L10.11 14.26 L10.68 14.20 L11.25 14.10 L11.81 13.96 L12.37 13.79 L12.92 13.59 L13.45 13.36 L13.97 13.09 L14.46 12.80 L14.93 12.47 L15.38 12.11 L15.79 11.73 L16.18 11.32" fill="none" stroke="#ced0d6" stroke-width="1.3" stroke-linecap="round"/></svg>
<div class="a" style="left:937px;top:126px;width:30px;height:30px;background:#494b50;border-radius:6px"></div>
<svg style="left:942px;top:133.5px" width="20.00" height="15.00" viewBox="5 7.5 20 15"><path d="M5.9 21.8 C4.6 18 6.5 14 9 12.2 C12 10 16 10 19.5 11.4 C21 12 22.5 12.6 23.8 12.2 M19.3 21.8 C19 18.5 21 16.5 23.3 13.6 C25 11.5 25.2 8.6 22.9 8 C21.3 7.7 20.2 9 20.9 10.2 M5.9 21.8 H7.4 Q9.3 19 11.2 21.8 H12.9 Q14.8 19 16.7 21.8 H19.3 M9.6 12.4 Q10 16.4 12.4 16.4 Q14.1 16.2 14.8 14.8" fill="none" stroke="#dfe1e5" stroke-width="1.300" stroke-linecap="round" stroke-linejoin="round"/><circle cx="17.6" cy="14.4" r="0.90" fill="#dfe1e5"/></svg>
<div class="t" style="left:54.5px;top:520.42px;font-size:12.5px;color:#dfe1e5;font-family:'Liberation Sans',sans-serif;font-weight:bold;letter-spacing:-0.35px;transform:scaleX(0.9380);transform-origin:left;">Build</div>
<div class="t" style="left:111px;top:520.42px;font-size:12.5px;color:#dfe1e5;font-family:'Liberation Sans',sans-serif;letter-spacing:-0.35px;transform:scaleX(0.9724);transform-origin:left;">Sync</div>
<svg style="left:149px;top:521px;" width="8" height="8" viewBox="0 0 8 8"><path d="M0.5 0.5 L7.5 7.5 M7.5 0.5 L0.5 7.5" stroke="#8c8f95" stroke-width="1.1"/></svg>
<div class="a" style="left:99px;top:542px;width:69px;height:3px;background:#3574f0;border-radius:1.5px"></div>
<div class="a" style="left:883px;top:518px;width:2px;height:2px;background:#d0d2d6;"></div>
<div class="a" style="left:883px;top:523px;width:2px;height:2px;background:#d0d2d6;"></div>
<div class="a" style="left:883px;top:528px;width:2px;height:2px;background:#d0d2d6;"></div>
<div class="a" style="left:903.5px;top:523px;width:13px;height:2px;background:#8e9196;"></div>
<svg style="left:47.5px;top:551px;" width="24" height="24" viewBox="0 0 24 24"><g fill="none" stroke="#ced0d6" stroke-width="1.2" stroke-linecap="round" stroke-linejoin="round"><path d="M16.4 7.6 Q14.6 6 12.6 6 Q7.6 6.2 7.5 13.3"/><path d="M5.3 11.3 L7.5 13.6 L9.7 11.3"/><path d="M9.6 16.6 Q11.2 18 13.2 18 Q18.4 17.8 18.5 10.4"/><path d="M16.3 12.6 L18.5 10.2 L20.7 12.6"/></g></svg>
<div class="a" style="left:55px;top:583px;width:12px;height:12px;background:#5a5d63;border-radius:2px"></div>
<svg style="left:55px;top:608px;" width="12" height="15" viewBox="0 0 12 15"><g fill="none" stroke="#ced0d6" stroke-width="1.2" stroke-linejoin="round"><path d="M2.5 0.8 H9.5 M3.5 0.8 L4.2 5 L1 9 H11 L7.8 5 L8.5 0.8 M6 9 V14"/></g></svg>
<svg style="left:53px;top:635px;" width="18" height="16" viewBox="0 0 18 16"><g fill="none" stroke="#ced0d6" stroke-width="1.2"><path d="M0.8 5.8 Q8 -2.5 15.2 5.8 Q8 14 0.8 5.8 Z"/><circle cx="8" cy="5.8" r="2.2"/></g><path d="M17.5 11.5 V15 H14 Z" fill="#ced0d6"/></svg>
<svg style="left:116px;top:557px;" width="12" height="9" viewBox="0 0 12 9"><path d="M0.8 4.5 L4 7.8 L11 0.8" fill="none" stroke="#5fad65" stroke-width="1.6"/></svg>
<div class="t" style="left:133px;top:557.42px;font-size:12.5px;color:#dfe1e5;font-family:'Liberation Sans',sans-serif;font-weight:bold;letter-spacing:-0.35px;transform:scaleX(0.9741);transform-origin:left;">Wise:</div>
<div class="t" style="left:168.5px;top:557.42px;font-size:12.5px;color:#dfe1e5;font-family:'Liberation Sans',sans-serif;letter-spacing:-0.2982142857142855px;">finished</div>
<div class="t" style="left:214.5px;top:557.42px;font-size:12.5px;color:#868a91;font-family:'Liberation Sans',sans-serif;letter-spacing:0.13593749999999982px;">At 2024-(</div>
<div class="t" style="left:270.5px;top:558.27px;font-size:11.5px;color:#868a91;font-family:'Liberation Sans',sans-serif;letter-spacing:-0.3062692307692305px;">10 sec, 473 ms</div>
<div class="a" style="left:82px;top:836px;width:204px;height:8px;background:#4a4c50;"></div>
<div class="t" style="left:373px;top:549.57px;font-size:14px;color:#bcbec4;font-family:'Liberation Mono',monospace;letter-spacing:-0.4px;">Starting Gradle Daemon...</div>
<div class="t" style="left:373px;top:571.57px;font-size:14px;color:#bcbec4;font-family:'Liberation Mono',monospace;letter-spacing:-0.4px;">Gradle Daemon started in 1 s 403 ms</div>
<div class="t" style="left:373px;top:593.57px;font-size:14px;color:#bcbec4;font-family:'Liberation Mono',monospace;letter-spacing:-0.4px;">> Task :prepareKotlinBuildScriptModel UP-TO-DATE</div>
<div class="t" style="left:373px;top:637.57px;font-size:14px;color:#bcbec4;font-family:'Liberation Mono',monospace;letter-spacing:-0.4px;">BUILD SUCCESSFUL in 8s</div>
<svg style="left:905px;top:557px;" width="15" height="13" viewBox="0 0 15 13"><g fill="none" stroke="#ced0d6" stroke-width="1.2"><path d="M0 1 H14 M0 11.5 H5"/><path d="M0 6.3 H11 Q14 6.3 14 9 Q14 11.5 11 11.5 H8"/><path d="M9.5 9.5 L7.8 11.5 L9.5 13.3"/></g></svg>
<svg style="left:905px;top:583px;" width="15" height="12" viewBox="0 0 15 12"><g fill="none" stroke="#ced0d6" stroke-width="1.2"><path d="M0 1 H5 M0 5.5 H5 M0 11 H14"/><path d="M10 0 V8.5 M7.2 5.8 L10 8.6 L12.8 5.8"/></g></svg>
<svg style="left:906px;top:608px;" width="12" height="15" viewBox="0 0 12 15"><g fill="none" stroke="#ced0d6" stroke-width="1.2" stroke-linejoin="round"><path d="M0 3.2 H12 M4 3.2 V1.5 Q4 0.6 5 0.6 H7 Q8 0.6 8 1.5 V3.2"/><path d="M1.5 3.2 L2.3 13.8 H9.7 L10.5 3.2 M4.6 6 V11 M7.4 6 V11"/></g></svg>
<svg style="left:15px;top:856px;" width="9" height="9" viewBox="0 0 9 9"><rect x="0.6" y="0.6" width="7.8" height="7.8" rx="1.5" fill="#2b3a5a" stroke="#548af7" stroke-width="1.2"/></svg>
<div class="t" style="left:27px;top:855.42px;font-size:12.5px;color:#a8abb1;font-family:'Liberation Sans',sans-serif;letter-spacing:-0.35px;transform:scaleX(0.9355);transform-origin:left;">Wise</div>
<svg style="left:61px;top:856px;" width="6" height="9" viewBox="0 0 6 9"><path d="M0.6 0.6 L4.6 4.5 L0.6 8.4" fill="none" stroke="#a8abb1" stroke-width="1.1"/></svg>
<svg style="left:76px;top:852.5px" width="16.00" height="12.00" viewBox="5 7.5 20 15"><path d="M5.9 21.8 C4.6 18 6.5 14 9 12.2 C12 10 16 10 19.5 11.4 C21 12 22.5 12.6 23.8 12.2 M19.3 21.8 C19 18.5 21 16.5 23.3 13.6 C25 11.5 25.2 8.6 22.9 8 C21.3 7.7 20.2 9 20.9 10.2 M5.9 21.8 H7.4 Q9.3 19 11.2 21.8 H12.9 Q14.8 19 16.7 21.8 H19.3 M9.6 12.4 Q10 16.4 12.4 16.4 Q14.1 16.2 14.8 14.8" fill="none" stroke="#ced0d6" stroke-width="1.500" stroke-linecap="round" stroke-linejoin="round"/><circle cx="17.6" cy="14.4" r="0.90" fill="#ced0d6"/></svg>
<div class="t" style="left:97px;top:855.42px;font-size:12.5px;color:#a8abb1;font-family:'Liberation Sans',sans-serif;letter-spacing:-0.23863636363636365px;">build.gradle</div>
<div class="t" style="left:776px;top:855.42px;font-size:12.5px;color:#a8abb1;font-family:'Liberation Sans',sans-serif;letter-spacing:-0.31874999999999964px;">18:40</div>
<div class="t" style="left:823px;top:855.42px;font-size:12.5px;color:#a8abb1;font-family:'Liberation Sans',sans-serif;letter-spacing:-0.35px;transform:scaleX(0.7726);transform-origin:left;">LF</div>
<div class="t" style="left:850.5px;top:855.42px;font-size:12.5px;color:#a8abb1;font-family:'Liberation Sans',sans-serif;letter-spacing:-0.35px;transform:scaleX(0.9114);transform-origin:left;">UTF-8</div>
<div class="t" style="left:898px;top:855.42px;font-size:12.5px;color:#a8abb1;font-family:'Liberation Sans',sans-serif;letter-spacing:-0.33749999999999974px;">Tab*</div>
<svg style="left:941px;top:853px;" width="14" height="14" viewBox="0 0 14 14"><g fill="none" stroke="#ced0d6" stroke-width="1.2"><rect x="0.6" y="6" width="9" height="7" rx="1"/><path d="M6.5 6 V3.5 Q6.5 0.6 9.5 0.6 Q12.5 0.6 12.5 3.5 V4.5"/></g><circle cx="5.1" cy="9.5" r="0.9" fill="#ced0d6"/></svg>
<div class="a" style="left:654px;top:82px;width:36px;height:35px;background:transparent;border:3px solid #e8212a"></div>
<div class="a" style="left:926px;top:117px;width:47px;height:46px;background:transparent;border:3px solid #e8212a"></div>
<div class="a" style="left:365px;top:622px;width:197px;height:46px;background:transparent;border:3px solid #e8212a"></div>
<div class="a" style="left:0px;top:0px;width:1px;height:876px;background:#55585e;"></div>
<div class="a" style="left:972px;top:0px;width:1px;height:876px;background:#55585e;"></div>
<div class="a" style="left:0px;top:875px;width:973px;height:1px;background:#55585e;"></div>
</body></html>
